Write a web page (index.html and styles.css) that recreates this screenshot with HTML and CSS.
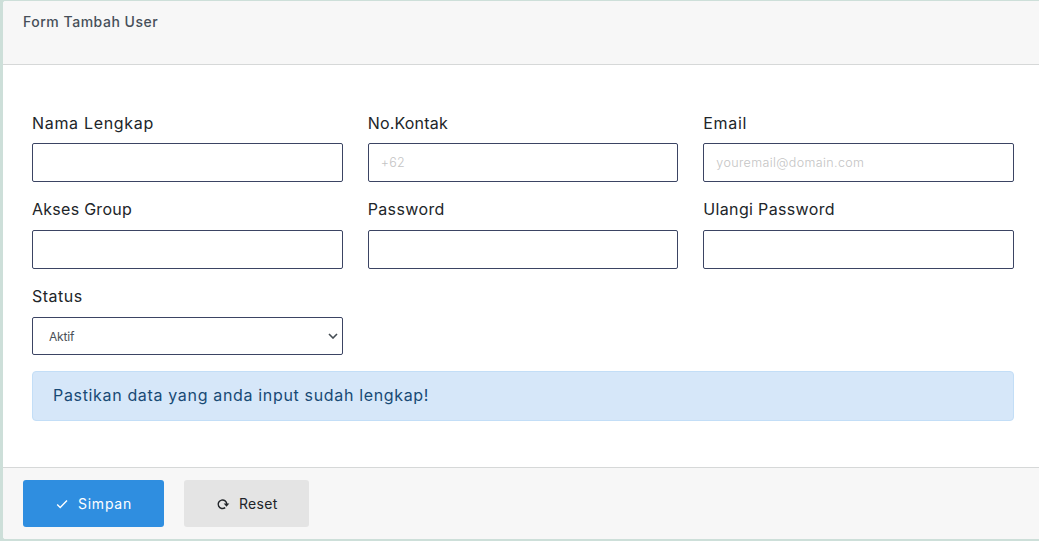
FILE: index.html
```html
<!DOCTYPE html>
<html lang="id">
<head>
<meta charset="utf-8">
<title>Form Tambah User</title>
<link rel="stylesheet" href="styles.css">
</head>
<body>
<form class="card">
  <header class="card-header"><h1 class="card-title">Form Tambah User</h1></header>
  <main class="card-body">
    <div class="fields">
      <div class="field"><label class="label" for="nama"><span class="t-nama">Nama Lengkap</span></label><input class="control" id="nama" type="text"></div>
      <div class="field"><label class="label" for="kontak"><span class="t-kontak">No.Kontak</span></label><input class="control" id="kontak" type="text" placeholder="+62"></div>
      <div class="field"><label class="label" for="email"><span class="t-email">Email</span></label><input class="control" id="email" type="text" placeholder="youremail@domain.com"></div>
      <div class="field"><label class="label label-high" for="akses"><span class="t-akses">Akses Group</span></label><input class="control" id="akses" type="text"></div>
      <div class="field"><label class="label label-high" for="pass"><span class="t-pass">Password</span></label><input class="control" id="pass" type="password"></div>
      <div class="field"><label class="label label-high" for="ulangi"><span class="t-ulangi">Ulangi Password</span></label><input class="control" id="ulangi" type="password"></div>
      <div class="field"><span class="label label-high"><span class="t-status">Status</span></span>
        <div class="control select"><span class="select-value">Aktif</span><svg class="chevron" viewBox="0 0 10 6"><path d="M1 1l4 4 4-4"/></svg></div>
      </div>
    </div>
    <div class="alert"><span>Pastikan data yang anda input sudah lengkap!</span></div>
  </main>
  <footer class="card-footer">
    <button class="btn btn-primary" type="button"><svg class="icon" viewBox="0 0 12 12"><path d="M1.2 6.6l3 2.8L11 2.4"/></svg><span>Simpan</span></button>
    <button class="btn btn-light" type="button"><svg class="icon" viewBox="0 0 12 12"><path d="M8.2 9.6A4.3 4.3 0 1 1 9.8 6.2"/><path class="arrow" d="M6.7 5.6H12.3L9.5 8.8z"/></svg><span>Reset</span></button>
  </footer>
</form>
</body>
</html>
```
FILE: styles.css
```css
* { box-sizing: border-box; }
body {
  margin: 0;
  height: 541px;
  padding: 1px 0 2px 3px;
  overflow: hidden;
  background: #cddfd9;
  color: #212529;
  font-family: Inter, "Open Sans", sans-serif;
}
.card {
  display: flex;
  flex-direction: column;
  height: 538px;
  background: #fff;
  border-radius: 3px 0 0 3px;
  overflow: hidden;
}
.card-header {
  height: 64px;
  padding: 11px 20px;
  background: #f7f7f7;
  border-bottom: 1px solid #d6d8d8;
}
.card-title {
  margin: 0;
  font-size: 14px;
  font-weight: 500;
  line-height: 20px;
  letter-spacing: 0.52px;
  color: #464f59;
}
.card-body { flex: 1; padding: 46px 25px 0 29px; }
.fields {
  display: grid;
  grid-template-columns: repeat(3, 1fr);
  column-gap: 25px;
  row-gap: 16px;
}
.field { height: 71px; }
.label {
  display: block;
  height: 32px;
  font-size: 16px;
  line-height: 25px;
  white-space: nowrap;
}
.label-high { line-height: 23px; }
.t-nama { letter-spacing: 0.68px; }
.t-kontak { letter-spacing: 0.2px; }
.t-email { letter-spacing: 0.65px; }
.t-akses { letter-spacing: 0.27px; }
.t-pass { letter-spacing: 0.38px; }
.t-ulangi { letter-spacing: 0.34px; }
.t-status { letter-spacing: 0.5px; }
.control {
  display: block;
  width: 100%;
  height: 39px;
  padding: 0 12px;
  border: 1px solid #3b4463;
  border-radius: 2px;
  background: #fff;
  font-family: inherit;
  font-size: 12.5px;
  font-weight: 300;
  letter-spacing: 0.37px;
  color: #495057;
  outline: none;
}
.control::placeholder { color: #c4c4c4; opacity: 1; }
.select {
  display: flex;
  align-items: center;
  justify-content: space-between;
  height: 38px;
  padding: 0 4px 0 16px;
  font-size: 12px;
  font-weight: 400;
  letter-spacing: -0.2px;
}
.chevron { width: 10px; height: 6px; fill: none; stroke: #454d54; stroke-width: 1.6; }
.alert {
  display: flex;
  align-items: center;
  height: 50px;
  margin-top: 15px;
  padding: 0 20px 2px;
  border: 1px solid #c3def7;
  border-radius: 4px;
  background: #d6e7f9;
  color: #184a75;
  font-size: 16px;
  letter-spacing: 0.66px;
}
.card-footer {
  display: flex;
  gap: 20px;
  height: 72px;
  padding: 12px 20px;
  background: #f7f7f7;
  border-top: 1px solid #d6d8d8;
}
.btn {
  display: flex;
  align-items: center;
  gap: 10px;
  height: 47px;
  padding: 0 0 0 33px;
  border: 0;
  border-radius: 3px;
  font-family: inherit;
  font-size: 14px;
  white-space: nowrap;
}
.btn-primary { width: 141px; background: #2f8ee0; color: #fff; letter-spacing: 0.75px; }
.btn-light { width: 125px; background: #e4e4e4; color: #212529; letter-spacing: 0.3px; }
.icon { width: 12px; height: 12px; overflow: visible; fill: none; stroke: currentColor; stroke-width: 1.4; }
.arrow { fill: currentColor; stroke: none; }
```
